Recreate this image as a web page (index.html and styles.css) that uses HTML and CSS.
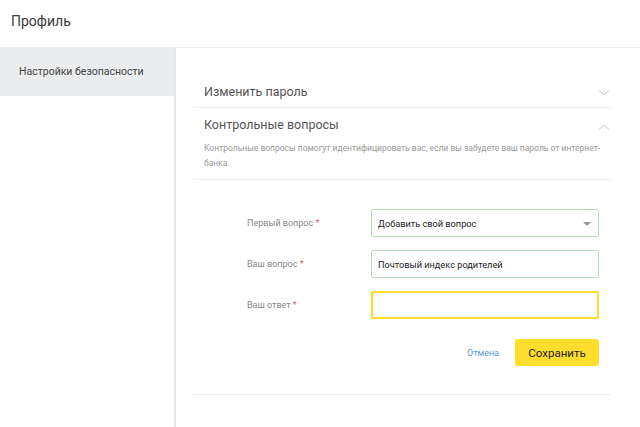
FILE: index.html
```html
<!DOCTYPE html>
<html lang="ru">
<head>
<meta charset="utf-8">
<link rel="stylesheet" href="styles.css">
</head>
<body>
<header class="top">Профиль</header>
<div class="layout">
  <aside class="side">
    <div class="side-item">Настройки безопасности</div>
  </aside>
  <main class="main">
    <section class="acc">
      <div class="acc-head">
        <span>Изменить пароль</span>
        <svg class="chev" width="12" height="8" viewBox="0 0 12 8"><path d="M1 1.5 L6 6 L11 1.5" fill="none" stroke="#c8c8c8" stroke-width="1"/></svg>
      </div>
    </section>
    <section class="acc open">
      <div class="acc-head">
        <span>Контрольные вопросы</span>
        <svg class="chev" width="12" height="8" viewBox="0 0 12 8"><path d="M1 6.5 L6 2 L11 6.5" fill="none" stroke="#c8c8c8" stroke-width="1"/></svg>
      </div>
      <p class="desc">Контрольные вопросы помогут идентифицировать вас, если вы забудете ваш пароль от интернет-банка.</p>
    </section>
    <form class="form">
      <div class="row">
        <label class="lbl">Первый вопрос <b>*</b></label>
        <div class="field ok select">Добавить свой вопрос<span class="tri"></span></div>
      </div>
      <div class="row">
        <label class="lbl">Ваш вопрос <b>*</b></label>
        <div class="field ok">Почтовый индекс родителей</div>
      </div>
      <div class="row">
        <label class="lbl">Ваш ответ <b>*</b></label>
        <div class="field focus"></div>
      </div>
      <div class="actions">
        <a class="cancel">Отмена</a>
        <button type="button" class="save">Сохранить</button>
      </div>
    </form>
    <div class="bottom-line"></div>
  </main>
</div>
</body>
</html>
```

FILE: styles.css
```css
* { box-sizing: border-box; }
html, body { margin: 0; padding: 0; background: #fff; }
body {
  font-family: Roboto, "Noto Sans", Arial, sans-serif;
  color: #333;
  width: 640px;
  height: 427px;
  overflow: hidden;
}
.top {
  height: 48px;
  padding: 13px 0 0 11px;
  font-size: 14px;
  color: #3a3a3a;
  border-bottom: 1px solid #ececec;
}
.layout {
  display: flex;
  height: 379px;
}
.side {
  width: 176px;
  flex: none;
  border-right: 2px solid #e6e6e6;
}
.side-item {
  height: 48px;
  background: #ebecee;
  font-size: 10.5px;
  color: #444;
  padding: 17px 0 0 19px;
}
.main {
  flex: 1;
  padding: 27px 30px 0 17px;
}
.acc-head {
  display: flex;
  justify-content: space-between;
  align-items: center;
  padding: 0 0 0 11px;
  font-size: 12.5px;
  color: #555;
  height: 32px;
}
.acc:first-child { border-bottom: 1.5px solid #ebebeb; }
.acc.open .acc-head { height: 33px; }
.chev { margin-top: 4px; }
.desc {
  margin: 0;
  padding: 0 0 8px 11px;
  font-size: 8.5px;
  line-height: 15px;
  color: #999;
  border-bottom: 1.5px solid #ebebeb;
}
.form {
  padding: 29px 0 0 0;
}
.row {
  display: flex;
  align-items: center;
  margin-bottom: 13px;
}
.lbl {
  width: 178px;
  padding-left: 54px;
  font-size: 9px;
  color: #888;
}
.lbl b { color: #e06060; font-weight: normal; }
.field {
  width: 228px;
  height: 28px;
  border: 1px solid #b8e0b8;
  border-radius: 2px;
  font-size: 9.2px;
  color: #222;
  padding: 0 6px;
  display: flex;
  align-items: center;
  position: relative;
}
.field.focus {
  border: 2px solid #ffdd2d;
  box-shadow: inset 0 0 2px rgba(0,0,0,0.08);
}
.tri {
  position: absolute;
  right: 7px;
  top: 12px;
  width: 0; height: 0;
  border-left: 4px solid transparent;
  border-right: 4px solid transparent;
  border-top: 4px solid #999;
}
.actions {
  display: flex;
  justify-content: flex-end;
  align-items: center;
  width: 406px;
  margin-top: 20px;
  gap: 16px;
}
.cancel {
  font-size: 9px;
  color: #5a9bd8;
}
.save {
  width: 84px;
  height: 27px;
  border: none;
  border-radius: 3px;
  background: #ffdd2d;
  font-family: inherit;
  font-size: 11.5px;
  color: #222;
  padding: 0;
}
.bottom-line {
  margin-top: 28px;
  border-top: 1.5px solid #ebebeb;
}
```
